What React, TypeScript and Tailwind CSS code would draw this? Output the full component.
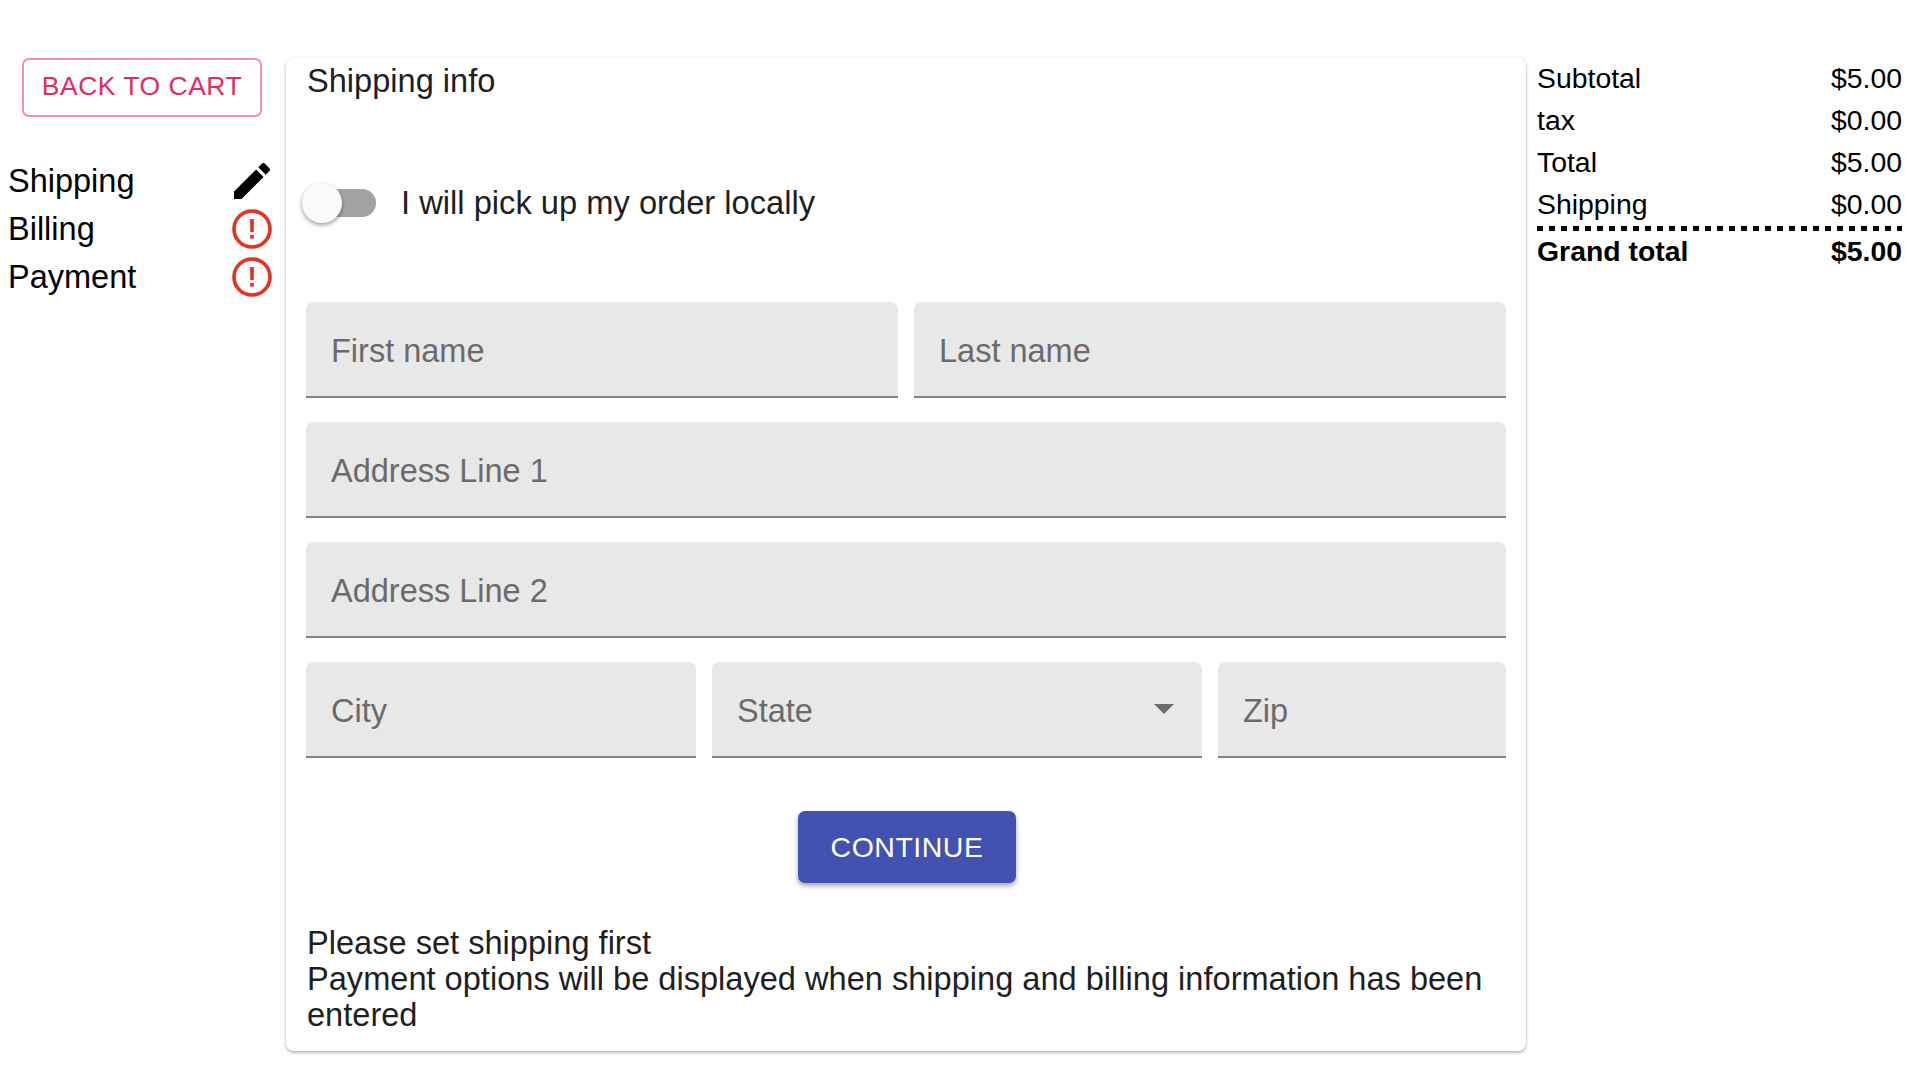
const rows = [
  ["Subtotal", "$5.00"],
  ["tax", "$0.00"],
  ["Total", "$5.00"],
  ["Shipping", "$0.00"],
];

const AlertIcon = () => (
  <svg viewBox="0 0 40 40" className="h-10 w-10">
    <circle cx="20" cy="20" r="18" fill="none" stroke="#e8301f" strokeWidth="3.6" />
    <rect x="18.2" y="10" width="3.6" height="13" fill="#e8301f" />
    <rect x="18.2" y="26" width="3.6" height="3.6" fill="#e8301f" />
  </svg>
);

const PencilIcon = () => (
  <svg viewBox="0 0 24 24" className="-mr-[4px] h-12 w-12">
    <path d="M3 17.25V21h3.75L17.81 9.94l-3.75-3.75L3 17.25zM20.71 7.04a1 1 0 0 0 0-1.41l-2.34-2.34a1 1 0 0 0-1.41 0l-1.83 1.83 3.75 3.75 1.83-1.83z" />
  </svg>
);

function Field({ label, className, select }: { label: string; className?: string; select?: boolean }) {
  return (
    <div
      className={`flex h-[96px] items-center justify-between rounded-t-[7px] border-b-2 border-[#858585] bg-[#e8e8e8] px-[25px] text-[32.5px] text-[#6b6b6b] ${className ?? ""}`}
    >
      <span className="pt-[4px]">{label}</span>
      {select && <span className="mr-[3px] h-0 w-0 border-x-[10px] border-t-[10px] border-x-transparent border-t-[#6b6b6b]" />}
    </div>
  );
}

export default function App() {
  return (
    <div className="flex min-h-[1092px] items-start bg-white pt-[58px] font-['Liberation_Sans',sans-serif] text-black">
      <aside className="w-[286px] shrink-0">
        <button className="ml-[22px] flex h-[59px] w-[240px] items-center justify-center rounded-[7px] border-2 border-[#f48fa8] pb-[2px] text-[26.5px] tracking-[0.5px] text-[#e62a5c]">
          BACK TO CART
        </button>
        <div className="mt-[40px] pl-2 pr-[14px] text-[32.5px]">
          <div className="flex h-[48px] items-center justify-between">
            Shipping
            <PencilIcon />
          </div>
          <div className="flex h-[48px] items-center justify-between">
            Billing
            <AlertIcon />
          </div>
          <div className="flex h-[48px] items-center justify-between">
            Payment
            <AlertIcon />
          </div>
        </div>
      </aside>

      <main className="flex h-[993px] w-[1240px] shrink-0 flex-col rounded-[8px] bg-white px-[20px] text-[#1f1f1f] shadow-[0_2px_3px_rgba(0,0,0,0.25),0_0_4px_rgba(0,0,0,0.1)]">
        <h2 className="pl-[1px] text-[32.6px] leading-[46px]">Shipping info</h2>
        <label className="mt-[76px] flex h-[46px] items-center text-[32.7px]">
          <span className="relative mr-[25px] h-[28px] w-[70px]">
            <span className="absolute right-0 top-0 h-[28px] w-[60px] rounded-full bg-[#a3a3a3]" />
            <span className="absolute left-[-4px] top-[-6px] h-[40px] w-[40px] rounded-full bg-[#fafafa] shadow-[0_2px_4px_rgba(0,0,0,0.4)]" />
          </span>
          I will pick up my order locally
        </label>
        <div className="mt-[76px] flex flex-col gap-[24px]">
          <div className="flex gap-4">
            <Field label="First name" className="flex-1" />
            <Field label="Last name" className="flex-1" />
          </div>
          <Field label="Address Line 1" />
          <Field label="Address Line 2" />
          <div className="flex gap-4">
            <Field label="City" className="w-[390px]" />
            <Field label="State" className="w-[490px]" select />
            <Field label="Zip" className="flex-1" />
          </div>
        </div>
        <button className="ml-[2px] mt-[53px] h-[72px] w-[218px] self-center rounded-[7px] bg-[#4351b0] text-[28.5px] tracking-[0.5px] text-white shadow-[0_3px_5px_rgba(0,0,0,0.35)]">
          CONTINUE
        </button>
        <p className="mt-[42px] pl-[1px] text-[32.6px] leading-[36px]">
          Please set shipping first
          <br />
          Payment options will be displayed when shipping and billing information has been entered
        </p>
      </main>

      <section className="ml-[11px] w-[365px] text-[28.4px]">
        {rows.map(([name, value]) => (
          <div key={name} className="flex h-[42px] items-center justify-between pb-[2px]">
            <span>{name}</span>
            <span>{value}</span>
          </div>
        ))}
        <div className="h-[5px] bg-[repeating-linear-gradient(90deg,#000_0_6px,transparent_6px_12px)]" />
        <div className="flex h-[42px] items-center justify-between pb-[1px] font-bold">
          <span>Grand total</span>
          <span>$5.00</span>
        </div>
      </section>
    </div>
  );
}
